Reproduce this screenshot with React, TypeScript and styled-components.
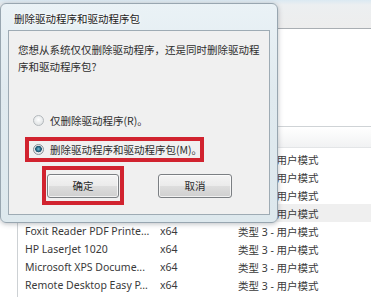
import styled, { createGlobalStyle } from "styled-components";

const GlobalStyle = createGlobalStyle`
  html, body {
    margin: 0;
    padding: 0;
  }
  body {
    width: 371px;
    height: 297px;
    overflow: hidden;
    background: #fff;
    font-family: "Noto Sans CJK SC", sans-serif;
  }
`;

const Screen = styled.div`
  position: relative;
  width: 371px;
  height: 297px;
  overflow: hidden;
  background: #fff;
`;

/* window behind the dialog */
const BackWindow = styled.div`
  display: flex;
  flex-direction: column;
  width: 100%;
  height: 100%;
`;

const BackTop = styled.div`
  height: 28px;
  flex-shrink: 0;
  background: linear-gradient(#dbe9f2 0, #eceff1 5px, #ededed 100%);
  border-bottom: 1px solid #a9aeb3;
`;

const BackPane = styled.div`
  height: 97px;
  flex-shrink: 0;
  background: #fff;
  border-bottom: 1px solid #cfd3d6;
`;

const ColumnHeader = styled.div`
  height: 20px;
  flex-shrink: 0;
  background: linear-gradient(#ffffff, #f1f2f3);
  border-bottom: 1px solid #e3e5e7;
`;

const DriverList = styled.div`
  flex: 1;
  display: flex;
  flex-direction: column;
  padding-top: 2px;
  margin-left: 17px;
  border-left: 1px solid #cdd1d4;
`;

const Row = styled.div<{ $selected?: boolean }>`
  height: 18px;
  flex-shrink: 0;
  display: grid;
  grid-template-columns: 135px 78px 1fr;
  align-items: center;
  padding-left: 7px;
  background: ${p => (p.$selected ? "#efefef" : "transparent")};
  font-family: "Noto Sans", "Noto Sans CJK SC", sans-serif;
  font-size: 10.5px;
  color: #3a3a3a;
  white-space: nowrap;
`;

const Cell = styled.span`
  overflow: hidden;
`;

/* the dialog */
const Dialog = styled.div`
  position: absolute;
  left: 0;
  top: 3px;
  width: 278px;
  height: 220px;
  box-sizing: border-box;
  display: flex;
  flex-direction: column;
  padding: 0 7px 7px 7px;
  border: 1px solid #98a6b0;
  border-radius: 6px;
  background: linear-gradient(#eaf2f6, #e0eaef 40%, #dde8ed);
  box-shadow: 0 1px 5px rgba(60, 70, 80, 0.35);
`;

const TitleBar = styled.div`
  height: 26px;
  flex-shrink: 0;
  box-sizing: border-box;
  padding: 8px 0 0 6px;
  font-size: 10.5px;
  line-height: 14px;
  color: #1c1c1c;
  text-shadow: 0 0 5px #fff, 0 0 3px #fff;
`;

const Client = styled.div`
  flex: 1;
  display: flex;
  flex-direction: column;
  background: #f0f0f0;
  border: 1px solid #9eabb4;
  font-size: 10.5px;
  color: #2e2e2e;
`;

const Message = styled.p`
  margin: 0;
  padding: 10px 4px 0 9px;
  line-height: 17px;
`;

const Choice = styled.label<{ $boxed?: boolean }>`
  display: flex;
  align-items: center;
  gap: 6px;
  height: ${p => (p.$boxed ? "25px" : "18px")};
  box-sizing: border-box;
  white-space: nowrap;
  ${p =>
    p.$boxed
      ? `
    width: 179px;
    margin: 8px 0 0 16px;
    padding-left: 4px;
    border: 4px solid #d1232f;
  `
      : `
    margin: 36px 0 0 0;
    padding-left: 24px;
  `}
`;

const Radio = styled.span<{ $checked?: boolean }>`
  width: 11px;
  height: 11px;
  flex-shrink: 0;
  box-sizing: border-box;
  border-radius: 50%;
  border: 1px solid ${p => (p.$checked ? "#8a9299" : "#b4b9bd")};
  background: ${p =>
    p.$checked
      ? "radial-gradient(circle at 50% 45%, #7fc0d8 0, #2c6f8c 2px, #1d4e68 3px, #e9ecee 3.6px, #d6dadd 100%)"
      : "radial-gradient(circle at 50% 40%, #ffffff 0, #eef0f1 40%, #d9dcde 100%)"};
`;

const ButtonRow = styled.div`
  display: flex;
  align-items: center;
  gap: 34px;
  margin: 4px 0 0 33px;
`;

const Highlight = styled.div`
  width: 82px;
  height: 39px;
  box-sizing: border-box;
  border: 4px solid #d1232f;
  display: flex;
  align-items: center;
  padding-left: 1px;
`;

const Button = styled.button<{ $wide?: boolean }>`
  width: ${p => (p.$wide ? "74px" : "72px")};
  height: 24px;
  padding: 0;
  border: 1px solid #7b7f83;
  border-radius: 3px;
  background: linear-gradient(#f4f4f4 0, #ebebeb 48%, #dddddd 52%, #cfcfcf 100%);
  box-shadow: inset 0 0 0 1px rgba(255, 255, 255, 0.7);
  font-family: "Noto Sans CJK SC", sans-serif;
  font-size: 10.5px;
  color: #2b2b2b;
`;

const drivers = [
  { name: "Canon Inkjet iP1180 series", arch: "x64" },
  { name: "Fax", arch: "x64" },
  { name: "Foxit PDF Printer Driver", arch: "x64" },
  { name: "Generic / Text Only", arch: "x64", selected: true },
  { name: "Foxit Reader PDF Printe...", arch: "x64" },
  { name: "HP LaserJet 1020", arch: "x64" },
  { name: "Microsoft XPS Docume...", arch: "x64" },
  { name: "Remote Desktop Easy P...", arch: "x64" },
];

export default function App() {
  return (
    <>
      <GlobalStyle />
      <Screen>
        <BackWindow>
          <BackTop />
          <BackPane />
          <ColumnHeader />
          <DriverList>
            {drivers.map(d => (
              <Row key={d.name} $selected={d.selected}>
                <Cell>{d.name}</Cell>
                <Cell>{d.arch}</Cell>
                <Cell>类型 3 - 用户模式</Cell>
              </Row>
            ))}
          </DriverList>
        </BackWindow>

        <Dialog>
          <TitleBar>删除驱动程序和驱动程序包</TitleBar>
          <Client>
            <Message>您想从系统仅仅删除驱动程序，还是同时删除驱动程序和驱动程序包?</Message>
            <Choice>
              <Radio />
              仅删除驱动程序(R)。
            </Choice>
            <Choice $boxed>
              <Radio $checked />
              删除驱动程序和驱动程序包(M)。
            </Choice>
            <ButtonRow>
              <Highlight>
                <Button>确定</Button>
              </Highlight>
              <Button $wide>取消</Button>
            </ButtonRow>
          </Client>
        </Dialog>
      </Screen>
    </>
  );
}
